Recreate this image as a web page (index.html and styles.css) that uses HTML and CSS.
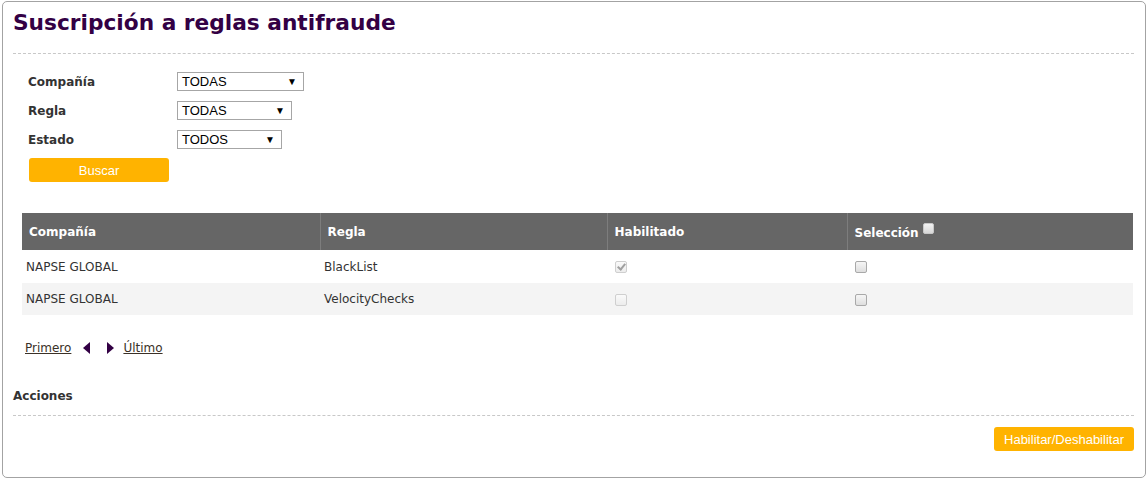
FILE: index.html
```html
<!DOCTYPE html>
<html lang="es">
<head>
<meta charset="utf-8">
<title>Suscripción a reglas antifraude</title>
<link rel="stylesheet" href="styles.css">
</head>
<body>
<div class="panel">
  <div class="page-head">
    <h1 class="title">Suscripción a reglas antifraude</h1>
  </div>

  <form class="filters">
    <div class="field">
      <label class="field-label">Compañía</label>
      <span class="select w1"><span class="select-text">TODAS</span><span class="caret">▼</span></span>
    </div>
    <div class="field">
      <label class="field-label">Regla</label>
      <span class="select w2"><span class="select-text">TODAS</span><span class="caret">▼</span></span>
    </div>
    <div class="field">
      <label class="field-label">Estado</label>
      <span class="select w3"><span class="select-text">TODOS</span><span class="caret">▼</span></span>
    </div>
    <button type="button" class="btn btn-search">Buscar</button>
  </form>

  <table class="grid">
    <colgroup>
      <col class="c1"><col class="c2"><col class="c3"><col class="c4">
    </colgroup>
    <thead>
      <tr>
        <th>Compañía</th>
        <th>Regla</th>
        <th>Habilitado</th>
        <th>Selección<span class="chk chk-head"></span></th>
      </tr>
    </thead>
    <tbody>
      <tr>
        <td>NAPSE GLOBAL</td>
        <td>BlackList</td>
        <td><span class="chk chk-disabled chk-on"></span></td>
        <td><span class="chk"></span></td>
      </tr>
      <tr class="alt">
        <td>NAPSE GLOBAL</td>
        <td>VelocityChecks</td>
        <td><span class="chk chk-disabled"></span></td>
        <td><span class="chk"></span></td>
      </tr>
    </tbody>
  </table>

  <div class="pager">
    <a class="pager-link" href="#">Primero</a>
    <svg class="tri" width="8" height="12" viewBox="0 0 8 12"><polygon points="8,0 8,12 1,6" fill="#330044"/></svg>
    <svg class="tri tri-next" width="8" height="12" viewBox="0 0 8 12"><polygon points="0,0 0,12 7,6" fill="#330044"/></svg>
    <a class="pager-link" href="#">Último</a>
  </div>

  <div class="actions-head">Acciones</div>
  <div class="actions">
    <button type="button" class="btn btn-toggle">Habilitar/Deshabilitar</button>
  </div>
</div>
</body>
</html>
```

FILE: styles.css
```css
html, body {
  margin: 0;
  padding: 0;
  background: #fff;
}

body {
  font-family: "DejaVu Sans", Verdana, sans-serif;
  color: #333;
}

.panel {
  box-sizing: border-box;
  width: 1144px;
  height: 477px;
  margin: 1px 0 0 2px;
  border: 1px solid #a3a3a3;
  border-radius: 5px;
  padding: 0 11px 0 10px;
}

.page-head {
  padding-top: 7px;
  padding-bottom: 16px;
  border-bottom: 1px dashed #c8c8c8;
}

.title {
  margin: 0;
  font-size: 21.7px;
  line-height: 28px;
  font-weight: bold;
  color: #330044;
}

.filters {
  margin: 18px 0 0 0;
  padding-left: 15px;
  display: flex;
  flex-direction: column;
  align-items: flex-start;
  gap: 10px;
}

.field {
  display: flex;
  align-items: center;
  height: 19px;
}

.field-label {
  width: 149px;
  font-size: 12px;
  font-weight: bold;
  color: #333;
}

.select {
  box-sizing: border-box;
  height: 19px;
  border: 1px solid #a6a6a6;
  background: #fff;
  display: flex;
  align-items: center;
  justify-content: space-between;
  padding: 0 6px 0 4px;
  font-family: "Liberation Sans", Arial, sans-serif;
  font-size: 13px;
  color: #000;
}

.w1 { width: 127px; }
.w2 { width: 115px; }
.w3 { width: 105px; }

.caret {
  font-size: 10px;
  line-height: 1;
}

.btn {
  box-sizing: border-box;
  height: 24px;
  width: 140px;
  border: none;
  border-radius: 3px;
  background: #ffb300;
  color: #fff;
  font-family: "Liberation Sans", Arial, sans-serif;
  font-size: 13px;
  padding: 0;
  cursor: pointer;
}

.btn-search {
  margin-top: -1px;
  margin-left: 1px;
}

.grid {
  margin: 31px 0 0 9px;
  width: 1111px;
  border-collapse: collapse;
  table-layout: fixed;
  font-size: 12px;
}

.c1 { width: 298px; }
.c2 { width: 287px; }
.c3 { width: 240px; }
.c4 { width: 286px; }

.grid th {
  height: 37px;
  padding: 0 7px;
  background: #666;
  color: #fff;
  text-align: left;
  font-weight: bold;
  border-left: 1px solid #7d7d7d;
  box-sizing: border-box;
}

.grid th:first-child { border-left: none; }

.grid td {
  height: 33px;
  padding: 0 4px;
  color: #333;
  box-sizing: border-box;
}

.grid tr.alt td {
  height: 32px;
  background: #f4f4f4;
}

.chk {
  display: inline-block;
  box-sizing: border-box;
  width: 12px;
  height: 12px;
  border: 1px solid #a9a9a9;
  border-radius: 2px;
  background: linear-gradient(#f6f6f6, #dedede);
  vertical-align: middle;
  margin-left: 4px;
  position: relative;
}

.chk-disabled {
  border-color: #cfcfcf;
  background: linear-gradient(#fafafa, #ececec);
}

.chk-on::after {
  content: "";
  position: absolute;
  left: 3px;
  top: 0px;
  width: 3px;
  height: 6px;
  border: solid #a0a0a0;
  border-width: 0 2px 2px 0;
  transform: rotate(40deg);
}

.chk-head {
  width: 11px;
  height: 11px;
  margin-left: 4px;
  vertical-align: 3px;
  border-color: #c8c8c8;
  background: linear-gradient(#f2f2f2, #d8d8d8);
}

.pager {
  display: flex;
  align-items: center;
  padding-left: 12px;
  margin-top: 25px;
  height: 16px;
  font-size: 12px;
}

.pager-link {
  color: #3b3127;
  text-decoration: underline;
}

.tri {
  margin-left: 11px;
}

.tri-next {
  margin-left: 17px;
  margin-right: 8px;
}

.actions-head {
  margin-top: 33px;
  font-size: 12px;
  font-weight: bold;
  padding-bottom: 12px;
  border-bottom: 1px dashed #c8c8c8;
}

.actions {
  display: flex;
  justify-content: flex-end;
  padding-top: 11px;
}
```
